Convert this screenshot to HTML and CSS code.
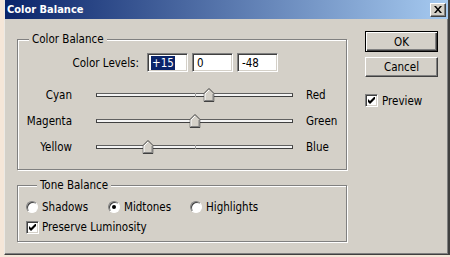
FILE: index.html
```html
<!DOCTYPE html>
<html lang="en">
<head>
    <meta charset="UTF-8">
    <meta name="viewport" content="width=device-width, initial-scale=1.0">
    <title>Color Balance</title>
    <link rel="stylesheet" href="styles.css">
</head>
<body>
    <div class="window">
        <div class="titlebar">
            <span class="title">Color Balance</span>
            <button class="close-btn" aria-label="Close">
                <svg width="8" height="7" viewBox="0 0 8 7">
                    <path d="M0 0h2l2 2.5L6 0h2L5 3.5 8 7H6L4 4.5 2 7H0l3-3.5z" fill="#000"/>
                </svg>
            </button>
        </div>

        <div class="dialog">
            <div class="main-col">
                <fieldset class="group balance-group">
                    <legend>Color Balance</legend>
                    <div class="levels-row">
                        <span class="levels-label">Color Levels:</span>
                        <div class="field"><span class="selected">+15</span></div>
                        <div class="field">0</div>
                        <div class="field">-48</div>
                    </div>

                    <div class="slider-row">
                        <span class="slider-left">Cyan</span>
                        <div class="track">
                            <span class="tick"></span>
                            <span class="thumb" style="left: 57.5%">
                                <svg width="11" height="14" viewBox="0 0 11 14">
                                    <polygon points="0.5,5.5 5.5,0.5 10.5,5.5 10.5,13.5 0.5,13.5" fill="#d4d0c8" stroke="#404040"/>
                                    <polyline points="1.5,12.5 1.5,6 5.5,2 " fill="none" stroke="#fff"/>
                                    <polyline points="9.5,6 9.5,12.5 1.5,12.5" fill="none" stroke="#808080"/>
                                </svg>
                            </span>
                        </div>
                        <span class="slider-right">Red</span>
                    </div>

                    <div class="slider-row">
                        <span class="slider-left">Magenta</span>
                        <div class="track">
                            <span class="tick"></span>
                            <span class="thumb" style="left: 50%">
                                <svg width="11" height="14" viewBox="0 0 11 14">
                                    <polygon points="0.5,5.5 5.5,0.5 10.5,5.5 10.5,13.5 0.5,13.5" fill="#d4d0c8" stroke="#404040"/>
                                    <polyline points="1.5,12.5 1.5,6 5.5,2 " fill="none" stroke="#fff"/>
                                    <polyline points="9.5,6 9.5,12.5 1.5,12.5" fill="none" stroke="#808080"/>
                                </svg>
                            </span>
                        </div>
                        <span class="slider-right">Green</span>
                    </div>

                    <div class="slider-row">
                        <span class="slider-left">Yellow</span>
                        <div class="track">
                            <span class="tick"></span>
                            <span class="thumb" style="left: 26%">
                                <svg width="11" height="14" viewBox="0 0 11 14">
                                    <polygon points="0.5,5.5 5.5,0.5 10.5,5.5 10.5,13.5 0.5,13.5" fill="#d4d0c8" stroke="#404040"/>
                                    <polyline points="1.5,12.5 1.5,6 5.5,2 " fill="none" stroke="#fff"/>
                                    <polyline points="9.5,6 9.5,12.5 1.5,12.5" fill="none" stroke="#808080"/>
                                </svg>
                            </span>
                        </div>
                        <span class="slider-right">Blue</span>
                    </div>
                </fieldset>

                <fieldset class="group tone-group">
                    <legend>Tone Balance</legend>
                    <div class="radio-row">
                        <label class="option"><span class="radio"></span>Shadows</label>
                        <label class="option"><span class="radio"><span class="dot"></span></span>Midtones</label>
                        <label class="option"><span class="radio"></span>Highlights</label>
                    </div>
                    <label class="option check-row">
                        <span class="checkbox">
                            <svg width="7" height="7" viewBox="0 0 7 7"><path d="M0 2v3l2 2 5-5V-1L2 4z" fill="#000"/></svg>
                        </span>Preserve Luminosity
                    </label>
                </fieldset>
            </div>

            <div class="side-col">
                <button class="btn btn-default">OK</button>
                <button class="btn">Cancel</button>
                <label class="option preview">
                    <span class="checkbox">
                        <svg width="7" height="7" viewBox="0 0 7 7"><path d="M0 2v3l2 2 5-5V-1L2 4z" fill="#000"/></svg>
                    </span>Preview
                </label>
            </div>
        </div>
    </div>
</body>
</html>
```

FILE: styles.css
```css
* {
    box-sizing: border-box;
}
body {
    margin: 0;
    background-color: #f5e6d8;
    font-family: 'DejaVu Sans Condensed', 'DejaVu Sans', sans-serif;
    font-stretch: condensed;
    font-size: 11.5px;
    color: #000;
    overflow: hidden;
}
.window {
    margin-left: 4px;
    width: 446px;
    height: 255px;
    background-color: #d4d0c8;
    border-left: 1px solid #ece9e4;
    border-right: 2px solid #404040;
    border-bottom: 1px solid #404040;
    box-shadow: inset -1px -1px 0 #808080;
}
.titlebar {
    height: 19px;
    display: flex;
    align-items: center;
    justify-content: space-between;
    padding: 0 2px 0 2px;
    background: linear-gradient(to right, #0a246a, #a6caf0);
}
.title {
    color: #fff;
    font-weight: bold;
    font-size: 11px;
}
.close-btn {
    width: 16px;
    height: 14px;
    padding: 0;
    display: flex;
    align-items: center;
    justify-content: center;
    background-color: #d4d0c8;
    border: 1px solid;
    border-color: #fff #404040 #404040 #fff;
    box-shadow: inset -1px -1px 0 #808080;
}
.dialog {
    display: flex;
    padding: 12px 0 0 12px;
}
.main-col {
    width: 330px;
    padding-top: 2px;
}
.side-col {
    margin-left: 18px;
    display: flex;
    flex-direction: column;
}
.group {
    margin: 0;
    min-width: 0;
    border: 1px solid #808080;
    box-shadow: inset 1px 1px 0 #fff, 1px 1px 0 #fff;
}
.group legend {
    margin-left: 11px;
    padding: 0 3px;
    line-height: 13px;
    background-color: #d4d0c8;
}
.balance-group {
    padding: 7px 0 9px 0;
}
.tone-group {
    margin-top: 9px;
    padding: 7px 0 6px 8px;
}

/* color levels */
.levels-row {
    display: flex;
    align-items: center;
    gap: 4px;
    height: 19px;
}
.levels-label {
    width: 121px;
    margin-right: 4px;
    text-align: right;
}
.field {
    width: 41px;
    height: 19px;
    padding: 2px 0 0 4px;
    line-height: 14px;
    background-color: #fff;
    border: 1px solid;
    border-color: #808080 #fff #fff #808080;
    box-shadow: inset 1px 1px 0 #404040, inset -1px -1px 0 #d4d0c8;
}
.field:first-of-type {
    padding-left: 3px;
}
.selected {
    background-color: #0a246a;
    color: #fff;
    padding: 0 1px;
}

/* sliders */
.slider-row {
    display: flex;
    align-items: center;
    height: 26px;
}
.balance-group .levels-row + .slider-row {
    margin-top: 10px;
}
.slider-left {
    width: 54px;
    text-align: right;
}
.track {
    position: relative;
    width: 197px;
    height: 4px;
    margin: 0 13px 0 24px;
    background-color: #f4f4f4;
    border: 1px solid #404040;
    border-top-color: #606060;
}
.tick {
    position: absolute;
    left: 98px;
    top: -1px;
    width: 1px;
    height: 4px;
    background-color: #a0a0a0;
}
.thumb {
    position: absolute;
    top: -6px;
    width: 11px;
    height: 14px;
    transform: translateX(-50%);
    display: flex;
}

/* radios and checkboxes */
.option {
    display: flex;
    align-items: center;
    gap: 4px;
    height: 16px;
}
.radio-row {
    display: grid;
    grid-template-columns: 82px 82px 82px;
}
.check-row {
    margin-top: 4px;
    gap: 3px;
}
.radio {
    width: 12px;
    height: 12px;
    border-radius: 50%;
    display: flex;
    align-items: center;
    justify-content: center;
    background-color: #fff;
    border: 1px solid;
    border-color: #808080 #fff #fff #808080;
    box-shadow: inset 1px 1px 0 #404040;
}
.dot {
    width: 4px;
    height: 4px;
    border-radius: 50%;
    background-color: #000;
}
.checkbox {
    width: 13px;
    height: 13px;
    display: flex;
    align-items: center;
    justify-content: center;
    background-color: #fff;
    border: 1px solid;
    border-color: #808080 #fff #fff #808080;
    box-shadow: inset 1px 1px 0 #404040, inset -1px -1px 0 #d4d0c8;
}

/* buttons */
.btn {
    width: 73px;
    height: 20px;
    padding: 0;
    font-family: inherit;
    font-size: 11.5px;
    color: #000;
    background-color: #d4d0c8;
    border: 1px solid;
    border-color: #fff #404040 #404040 #fff;
    box-shadow: inset -1px -1px 0 #808080;
}
.btn-default {
    height: 21px;
    border-color: #000;
    box-shadow: inset 1px 1px 0 #fff, inset -1px -1px 0 #404040, inset -2px -2px 0 #808080;
}
.btn + .btn {
    margin-top: 5px;
}
.preview {
    margin-top: 17px;
    height: 13px;
}
```
